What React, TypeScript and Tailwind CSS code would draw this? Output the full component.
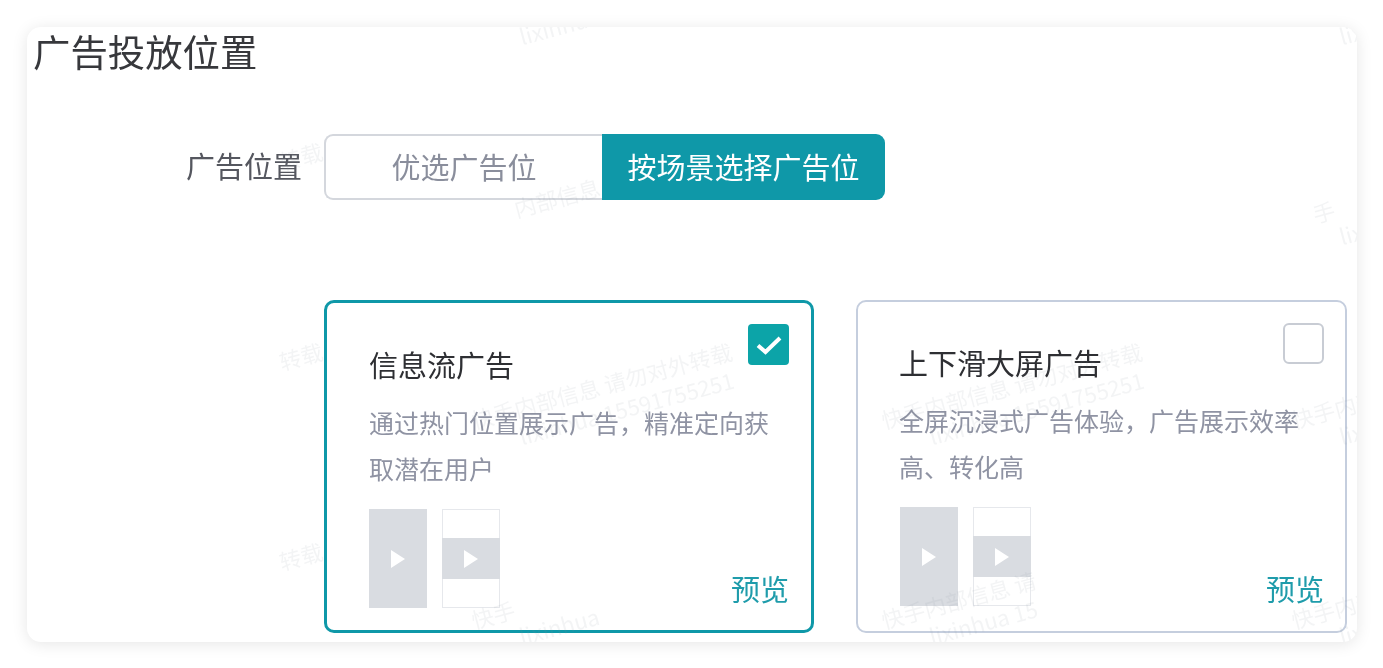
import React from "react";

const font = { fontFamily: '"Noto Sans CJK SC", "Noto Sans", sans-serif' };

const A = "快手内部信息 请勿对外转载";
const B = "lixinhua 15591755251";

// Watermark tiles, row by row: [start of the visible part of line one, its end, end of the visible part of line two].
const tiles: [number, number, number][] = [
  [0, 0, 0], [0, 0, 8], [0, 0, 0], [0, 0, 5],
  [11, 13, 0], [2, 6, 0], [0, 0, 0], [1, 2, 3],
  [11, 13, 0], [0, 13, 20], [0, 13, 20], [0, 4, 5],
  [11, 13, 0], [0, 2, 8], [0, 8, 11], [0, 4, 5],
];

function Play() {
  return (
    <svg width="16" height="20" viewBox="0 0 16 20" aria-hidden="true">
      <polygon points="1,1 15,10 1,19" fill="#ffffff" />
    </svg>
  );
}

function Thumbs({ className }: { className?: string }) {
  return (
    <div className={"flex gap-[15px] " + (className ?? "")}>
      <div className="w-[58px] h-[99px] bg-[#d9dce1] flex items-center justify-center">
        <Play />
      </div>
      <div className="w-[58px] h-[99px] border border-[#e6e8ec] flex items-center justify-center">
        <div className="w-[58px] h-[41px] shrink-0 bg-[#d9dce1] flex items-center justify-center">
          <Play />
        </div>
      </div>
    </div>
  );
}

function Tile({ from, to, second }: { from: number; to: number; second: number }) {
  const pad = from > 6 ? from - 0.75 : from;
  return (
    <div className="origin-top-left -rotate-[15deg] text-[22px] leading-[28px] text-[#8a90a0]/10 whitespace-nowrap">
      <div className="h-[28px]" style={{ paddingLeft: `${pad}em` }}>
        {A.slice(from, to)}
      </div>
      <div className="pl-[42px]">{B.slice(0, second)}</div>
    </div>
  );
}

function AdCard({
  active,
  title,
  line1,
  line2,
}: {
  active: boolean;
  title: string;
  line1: string;
  line2: string;
}) {
  return (
    <div
      className={
        "relative h-[333px] rounded-[10px] " +
        (active
          ? "w-[490px] border-[3px] border-[#0f98a8] pl-[42px] pr-[22px] pt-[40px]"
          : "w-[491px] border-2 border-[#c5cede] pl-[41px] pr-[21px] pt-[39px]")
      }
    >
      <div className="text-[29px] leading-[42px] text-[#2e2f33]">{title}</div>
      <div className="text-[25px] leading-[46px] text-[#8f93a3] whitespace-nowrap mt-[14px]">
        <div>{line1}</div>
        <div>{line2}</div>
      </div>
      <div className="flex items-end justify-between mt-[18px]">
        <Thumbs className={active ? "" : "ml-px"} />
        <div className={"text-[29px] leading-[42px] text-[#1f9cab] " + (active ? "mb-[-1px]" : "mb-[-3px]")}>预览</div>
      </div>
      {active ? (
        <div className="absolute top-[21px] right-[22px] w-[41px] h-[41px] rounded-[4px] bg-[#0ca4a8] flex items-center justify-center">
          <svg width="26" height="20" viewBox="0 0 26 20" aria-hidden="true">
            <path d="M2 10.5 L9.5 17 L24 3" fill="none" stroke="#ffffff" strokeWidth="4" />
          </svg>
        </div>
      ) : (
        <div className="absolute top-[21px] right-[21px] w-[41px] h-[41px] rounded-[6px] border-2 border-[#c8ccd4] bg-white" />
      )}
    </div>
  );
}

export default function App() {
  return (
    <div className="w-[1383px] h-[668px] bg-white p-[27px] overflow-hidden blur-[0.4px]" style={font}>
      <div className="relative w-[1330px] h-[615px] rounded-[14px] bg-white shadow-[0_2px_16px_rgba(0,0,0,0.10)] overflow-hidden">
        <div className="pl-[6px] text-[37.4px] leading-[48px] text-[#37383c]">广告投放位置</div>

        <div className="flex items-center mt-[59px] ml-[159px]">
          <div className="w-[116px] text-[29px] leading-[42px] mb-[4px] text-[#55575f] whitespace-nowrap">广告位置</div>
          <div className="flex ml-[22px] h-[66px] text-[29px]">
            <div className="w-[278px] rounded-l-[9px] border-2 border-r-0 border-[#d4d7dd] flex items-center justify-center text-[#8a8e9c]">
              优选广告位
            </div>
            <div className="w-[283px] rounded-r-[9px] bg-[#0f98a8] flex items-center justify-center text-white">
              按场景选择广告位
            </div>
          </div>
        </div>

        <div className="flex gap-[42px] ml-[297px] mt-[100px]">
          <AdCard active title="信息流广告" line1="通过热门位置展示广告，精准定向获" line2="取潜在用户" />
          <AdCard active={false} title="上下滑大屏广告" line1="全屏沉浸式广告体验，广告展示效率" line2="高、转化高" />
        </div>

        <div className="absolute left-[31px] top-[-21px] grid grid-cols-[repeat(4,410px)] auto-rows-[200px] pointer-events-none">
          {tiles.map(([from, to, second], i) => (
            <Tile key={i} from={from} to={to} second={second} />
          ))}
        </div>
      </div>
    </div>
  );
}
